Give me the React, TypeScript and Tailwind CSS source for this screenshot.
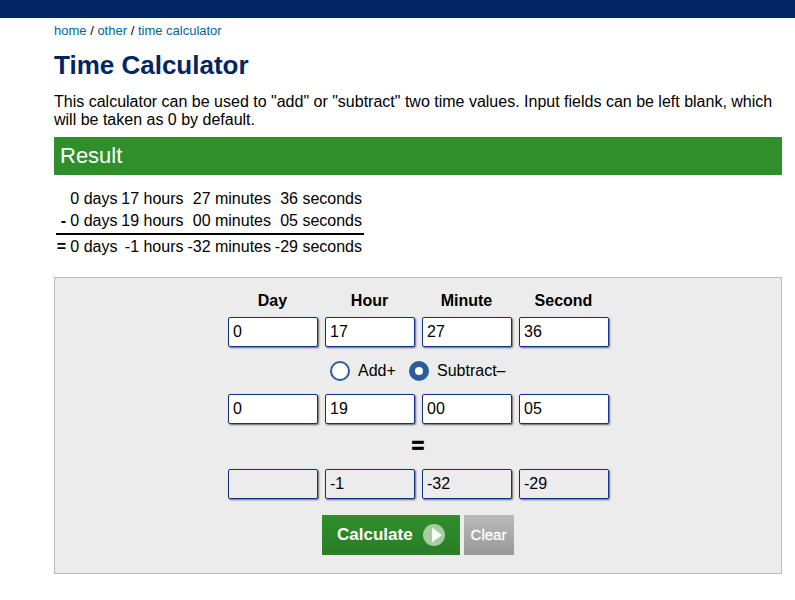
const labels = ["Day", "Hour", "Minute", "Second"];

const resultRows = [
  { sign: "", cells: ["0 days", "17 hours", "27 minutes", "36 seconds"] },
  { sign: "-", cells: ["0 days", "19 hours", "00 minutes", "05 seconds"] },
  { sign: "=", cells: ["0 days", "-1 hours", "-32 minutes", "-29 seconds"] },
];

function ResultRow({ sign, cells }: { sign: string; cells: string[] }) {
  return (
    <div className="grid h-[22px] w-[308px] grid-cols-[10px_51.5px_66px_87.5px_91px] text-right leading-[22px] whitespace-nowrap">
      <b>{sign}</b>
      {cells.map((cell) => (
        <span key={cell}>{cell}</span>
      ))}
    </div>
  );
}

function FieldRow({ values, readOnly = false }: { values: string[]; readOnly?: boolean }) {
  return (
    <div className="flex gap-[7px]">
      {values.map((value, i) => (
        <input
          key={labels[i]}
          aria-label={labels[i]}
          defaultValue={value}
          readOnly={readOnly}
          className={
            "h-[30px] w-[90px] rounded-[2px] border border-[#0f3189] px-[4px] text-base text-black shadow-[1px_1px_2px_#666] outline-none " +
            (readOnly ? "bg-[#ececec]" : "bg-white")
          }
        />
      ))}
    </div>
  );
}

function Radio({ checked }: { checked: boolean }) {
  return (
    <span
      className={
        "box-border size-5 rounded-full border-[#2b5d9b] bg-white " +
        (checked ? "border-[6px]" : "border-2")
      }
    />
  );
}

export default function App() {
  return (
    <div className="h-[600px] w-[795px] overflow-hidden bg-white font-['Liberation_Sans',Arial,sans-serif] text-base text-black">
      <header className="h-[18px] bg-[#032563]" />
      <main className="ml-[54px] w-[728px]">
        <nav className="h-[26px] pt-[5px] text-[13px] leading-[15px]">
          <a className="text-[#0066a0]">home</a> / <a className="text-[#0066a0]">other</a> /{" "}
          <a className="text-[#0066a0]">time calculator</a>
        </nav>
        <h1 className="h-[48px] pt-[6px] text-[26px] leading-[30px] font-bold text-[#032563]">
          Time Calculator
        </h1>
        <p className="h-[45px] w-[728px] pt-px leading-[18px]">
          This calculator can be used to "add" or "subtract" two time values. Input fields can be left
          blank, which will be taken as 0 by default.
        </p>
        <h2 className="h-[38px] bg-[#2f8f2b] pl-[6px] text-[22px] leading-[37px] text-white">Result</h2>
        <section className="mt-[13px] ml-[2px] h-[89px]">
          <ResultRow {...resultRows[0]} />
          <ResultRow {...resultRows[1]} />
          <div className="mt-px mb-px h-[2px] w-[308px] bg-black" />
          <ResultRow {...resultRows[2]} />
        </section>
        <form className="flex h-[297px] flex-col border border-[#bbb] bg-[#ececec] pl-[173px]">
          <div className="flex h-[39px] gap-1.5 pt-[14px] leading-[18px] font-bold">
            {labels.map((label) => (
              <span key={label} className="w-[91px] pr-[2px] text-center">
                {label}
              </span>
            ))}
          </div>
          <FieldRow values={["0", "17", "27", "36"]} />
          <div className="flex h-[47px] items-center pl-[102px] leading-[18px]">
            <Radio checked={false} />
            <span className="ml-2 w-[51px]">Add+</span>
            <Radio checked />
            <span className="ml-2">Subtract–</span>
          </div>
          <FieldRow values={["0", "19", "00", "05"]} />
          <div className="flex h-[45px] w-[382px] items-center justify-center pr-[2px] pb-[2px] text-[22px] leading-6 font-bold [-webkit-text-stroke:0.7px_black]">
            =
          </div>
          <FieldRow values={["", "-1", "-32", "-29"]} readOnly />
          <div className="mt-4 ml-[94px] flex gap-1">
            <button
              type="button"
              className="flex h-10 w-[138px] items-center bg-linear-to-b from-[#2f8f2b] to-[#2a7d26] pl-[15px] text-[17px] font-bold text-white"
            >
              <span className="w-[86px] text-left">Calculate</span>
              <svg width="22" height="22" viewBox="0 0 22 22">
                <circle cx="11" cy="11" r="11" fill="#a5cca3" />
                <path d="M9 3.5v15l10-7.5z" fill="#f7fbf7" />
              </svg>
            </button>
            <button
              type="button"
              className="h-10 w-[50px] bg-linear-to-b from-[#bababa] to-[#989898] pr-px text-[15px] text-white [-webkit-text-stroke:0.3px_white]"
            >
              Clear
            </button>
          </div>
        </form>
      </main>
    </div>
  );
}
